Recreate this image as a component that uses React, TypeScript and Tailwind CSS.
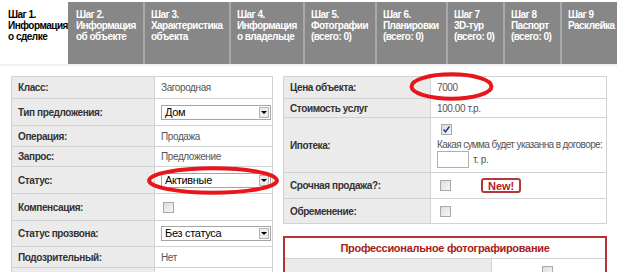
import React from 'react';

const TABS = [
  { w: 'w-[75px]', lines: ['Шаг 2.', 'Информация', 'об объекте'] },
  { w: 'w-[86px]', lines: ['Шаг 3.', 'Характеристика', 'объекта'] },
  { w: 'w-[74px]', lines: ['Шаг 4.', 'Информация', 'о владельце'] },
  { w: 'w-[72px]', lines: ['Шаг 5.', 'Фотографии', '(всего: 0)'] },
  { w: 'w-[71px]', lines: ['Шаг 6.', 'Планировки', '(всего: 0)'] },
  { w: 'w-[57px]', lines: ['Шаг 7', '3D-тур', '(всего: 0)'] },
  { w: 'w-[57px]', lines: ['Шаг 8', 'Паспорт', '(всего: 0)'] },
  { w: 'w-[60px]', lines: ['Шаг 9', 'Расклейка'] },
];

function Select({ value }: { value: string }) {
  return (
    <div className="flex items-center w-[110px] h-[15px] border border-[#a5a5a5] bg-white">
      <span className="flex-1 pl-[3px] text-[11px] tracking-[-0.3px] leading-none text-black">{value}</span>
      <span className="w-[10px] h-[11px] mr-[1px] border border-[#b5b5b5] bg-[#ececec] flex items-center justify-center">
        <span className="w-0 h-0 border-l-[3px] border-r-[3px] border-t-[3px] border-l-transparent border-r-transparent border-t-black" />
      </span>
    </div>
  );
}

function Check({ on }: { on?: boolean }) {
  return (
    <span className="inline-flex items-center justify-center w-[11px] h-[11px] border border-[#a8a8a8] bg-gradient-to-br from-[#dcdcdc] to-[#f8f8f8] align-middle">
      {on && (
        <svg width="9" height="9" viewBox="0 0 9 9">
          <path d="M1.5 4.5 L3.5 6.8 L7.5 1.5" fill="none" stroke="#2a3a9a" strokeWidth="1.5" />
        </svg>
      )}
    </span>
  );
}

function Row({ label, h, children }: { label: string; h: string; children: React.ReactNode }) {
  return (
    <tr className={h}>
      <td className="bg-[#ebebeb] border border-[#d2d2d2] pl-[6px] font-bold text-[#333] align-middle tracking-[-0.4px] whitespace-nowrap">{label}</td>
      <td className="bg-white border border-[#d2d2d2] pl-[6px] text-[#555] align-middle tracking-[-0.4px]">{children}</td>
    </tr>
  );
}

function Ellipse({ className }: { className: string }) {
  return (
    <svg className={'absolute pointer-events-none ' + className} viewBox="0 0 100 100" preserveAspectRatio="none">
      <ellipse cx="50" cy="50" rx="47" ry="42" fill="none" stroke="#e8151b" strokeWidth="4" vectorEffect="non-scaling-stroke" />
    </svg>
  );
}

export default function App() {
  return (
    <div className="relative w-[617px] h-[272px] overflow-hidden bg-white text-[10px] font-['Liberation_Sans',Arial,sans-serif]">
      {/* Tabs */}
      <div className="flex h-[66px] pt-[2px] border-b-2 border-b-[#f0f0f0]">
        <div className="w-[73px] pl-[8px] pt-[7px] font-bold text-black leading-[11px] tracking-[-0.5px]">
          <div>Шаг 1.</div>
          <div>Информация</div>
          <div>о сделке</div>
        </div>
        {TABS.map((t, i) => (
          <div
            key={i}
            className={
              t.w +
              (i === 0 ? ' pl-[8px]' : ' border-l-2 border-l-[#a9a9a9] pl-[6px]') +
              ' shrink-0 bg-[#878787] pt-[7px] font-bold text-white leading-[11px] tracking-[-0.5px] whitespace-nowrap overflow-hidden'
            }
          >
            {t.lines.map(l => (
              <div key={l}>{l}</div>
            ))}
          </div>
        ))}
      </div>

      <div className="flex items-start mt-[10px] pl-[11px] gap-[10px]">
        {/* Left table */}
        <table className="w-[262px] border-collapse table-fixed">
          <colgroup>
            <col className="w-[143px]" />
            <col />
          </colgroup>
          <tbody>
            <Row label="Класс:" h="h-[22px]">Загородная</Row>
            <Row label="Тип предложения:" h="h-[27px]"><Select value="Дом" /></Row>
            <Row label="Операция:" h="h-[21px]">Продажа</Row>
            <Row label="Запрос:" h="h-[20px]">Предложение</Row>
            <Row label="Статус:" h="h-[27px]"><Select value="Активные" /></Row>
            <Row label="Компенсация:" h="h-[27px]"><span className="pl-[2px]"><Check /></span></Row>
            <Row label="Статус прозвона:" h="h-[26px]"><Select value="Без статуса" /></Row>
            <Row label="Подозрительный:" h="h-[21px]">Нет</Row>
            <Row label="" h="h-[21px]">{''}</Row>
          </tbody>
        </table>

        {/* Right column */}
        <div className="w-[324px]">
          <table className="w-full border-collapse table-fixed">
            <colgroup>
              <col className="w-[147px]" />
              <col />
            </colgroup>
            <tbody>
              <Row label="Цена объекта:" h="h-[22px]">7000</Row>
              <Row label="Стоимость услуг" h="h-[19px]">100.00 т.р.</Row>
              <Row label="Ипотека:" h="h-[55px]">
                <div className="pt-[2px] pl-[4px]"><Check on /></div>
                <div className="mt-[3px] leading-[12px] whitespace-nowrap tracking-[-0.6px]">Какая сумма будет указанна в договоре:</div>
                <div className="flex items-center gap-[4px] pb-[3px]">
                  <span className="w-[32px] h-[17px] border border-[#b0b0b0] bg-white" />
                  <span>т. р.</span>
                </div>
              </Row>
              <Row label="Срочная продажа?:" h="h-[26px]">
                <div className="flex items-center">
                  <span className="pl-[3px] flex"><Check /></span>
                  <span className="ml-[30px] px-[5px] h-[15px] leading-[12px] border-2 border-[#b33a3a] rounded-[3px] text-[#b22222] font-bold text-[11px] tracking-normal">New!</span>
                </div>
              </Row>
              <Row label="Обременение:" h="h-[25px]"><span className="pl-[3px]"><Check /></span></Row>
            </tbody>
          </table>

          <div className="mt-[12px] border-2 border-[#b53535]">
            <div className="h-[21px] flex items-center justify-center font-bold text-[11px] tracking-[-0.3px] text-[#a82020] border-b border-[#d2d2d2]">
              Профессиональное фотографирование
            </div>
            <div className="flex h-[30px]">
              <div className="w-[207px] bg-[#ebebeb] border-r border-[#d2d2d2]" />
              <div className="flex-1 pl-[50px] pt-[4px]"><Check /></div>
            </div>
          </div>
        </div>
      </div>

      {/* Annotation ellipses */}
      <Ellipse className="left-[145px] top-[166px] w-[136px] h-[29px]" />
      <Ellipse className="left-[409px] top-[72px] w-[85px] h-[29px]" />
    </div>
  );
}
